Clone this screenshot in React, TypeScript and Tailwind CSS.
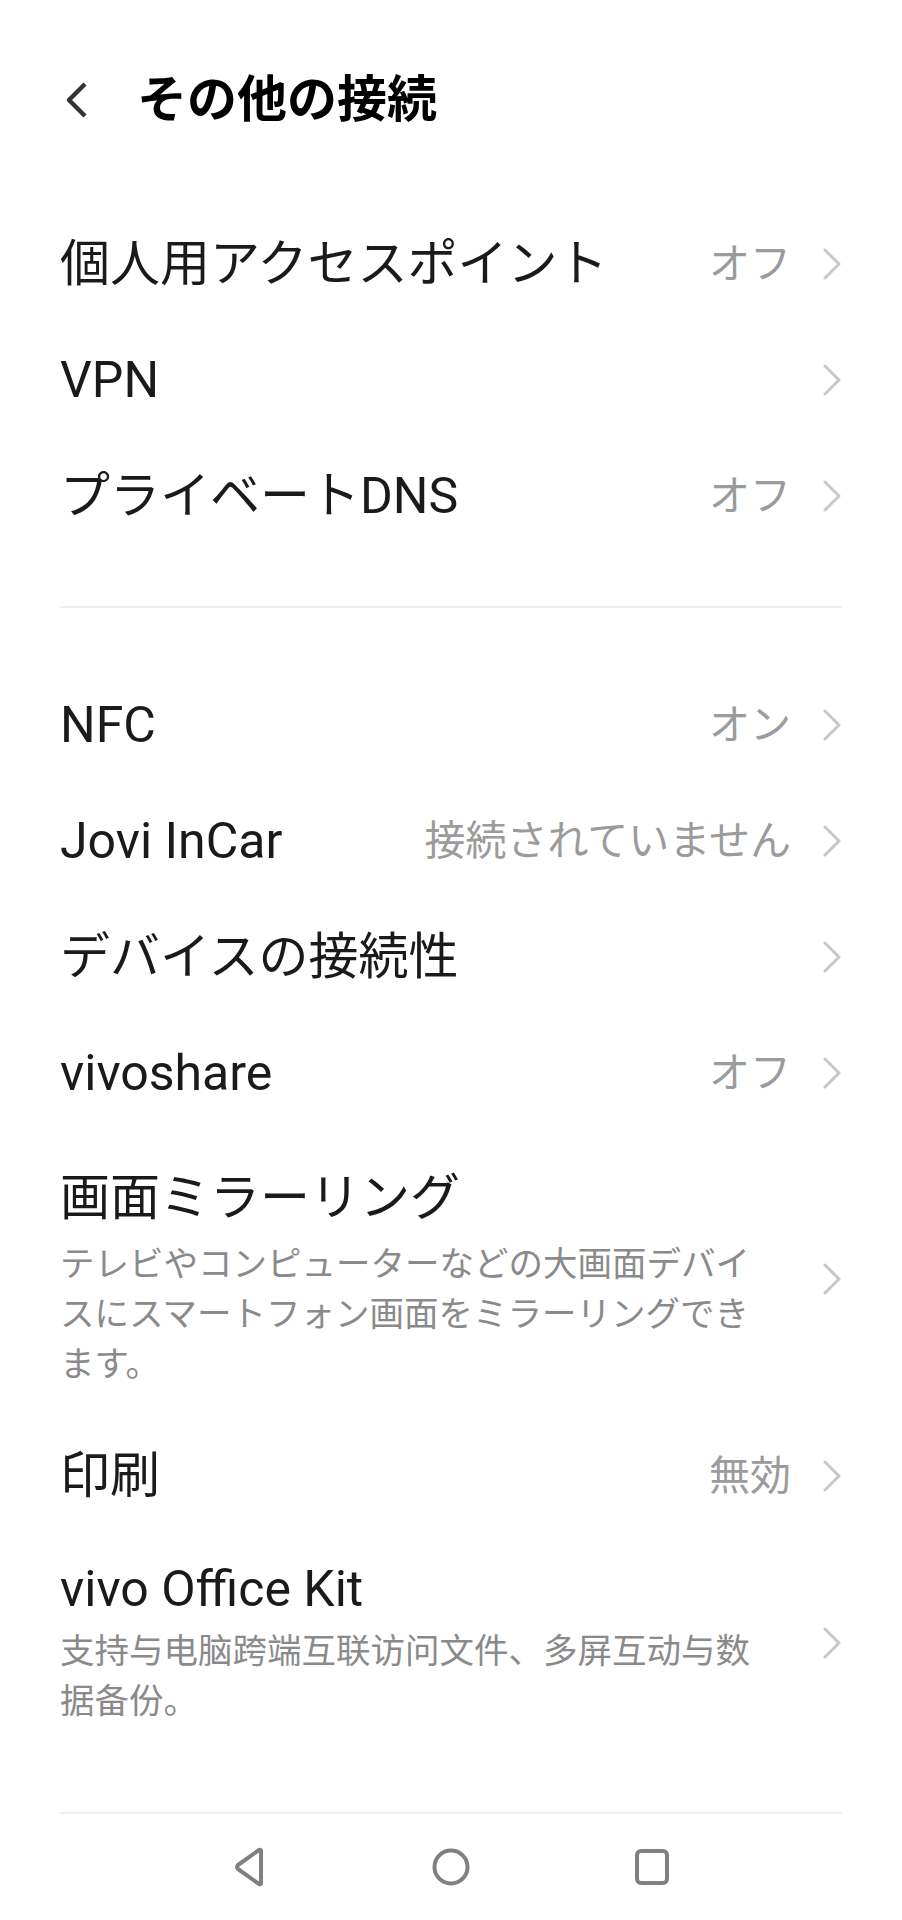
import React from 'react'

const jp = "font-['Roboto','Noto_Sans_CJK_JP',sans-serif]"
const sc = "font-['Roboto','Noto_Sans_CJK_SC',sans-serif]"

function Chevron() {
  return (
    <svg width="20" height="32" viewBox="0 0 20 32" className="shrink-0">
      <polyline points="3,2 17,16 3,30" fill="none" stroke="#c8c8c8" strokeWidth="3" strokeLinejoin="round" strokeLinecap="round" />
    </svg>
  )
}

function Row({ label, value }: { label: string; value?: string }) {
  return (
    <div className="flex h-[116px] items-center justify-between pl-[60px] pr-[60px]">
      <span className="text-[50px] leading-[60px] text-[#1a1a1a]">{label}</span>
      <div className="flex items-center gap-[31px]">
        {value && <span className="text-[41px] leading-[50px] text-[#9b9b9b]">{value}</span>}
        <Chevron />
      </div>
    </div>
  )
}

function Divider() {
  return <div className="mx-[60px] h-[2px] bg-[#efefef]" />
}

export default function App() {
  return (
    <div className={`flex h-[1920px] w-[902px] flex-col bg-white ${jp}`}>
      <div className="flex-1">
        {/* Header */}
        <div className="flex h-[200px] items-center pl-[65px]">
          <svg width="24" height="38" viewBox="0 0 24 38">
            <polyline points="20,3 4,19 20,35" fill="none" stroke="#333333" strokeWidth="4.5" strokeLinejoin="round" />
          </svg>
          <h1 className="ml-[48px] text-[50px] font-bold leading-[60px] text-black">その他の接続</h1>
        </div>

        <div className="pt-[6px]">
          <Row label="個人用アクセスポイント" value="オフ" />
          <Row label="VPN" />
          <Row label="プライベートDNS" value="オフ" />
        </div>

        <div className="mt-[52px]">
          <Divider />
        </div>

        <div className="mt-[59px]">
          <Row label="NFC" value="オン" />
          <Row label="Jovi InCar" value="接続されていません" />
          <Row label="デバイスの接続性" />
          <Row label="vivoshare" value="オフ" />

          {/* Screen mirroring */}
          <div className="flex items-center justify-between pb-[29px] pl-[60px] pr-[60px] pt-[37px]">
            <div className="w-[705px]">
              <div className="text-[50px] leading-[60px] text-[#1a1a1a]">画面ミラーリング</div>
              <p className="mt-[11px] text-[34.5px] leading-[50px] text-[#8a8a8a]">
                テレビやコンピューターなどの大画面デバイスにスマートフォン画面をミラーリングできます。
              </p>
            </div>
            <Chevron />
          </div>

          <Row label="印刷" value="無効" />

          {/* Office kit */}
          <div className="flex items-center justify-between pb-[23px] pl-[60px] pr-[60px] pt-[25px]">
            <div className="w-[705px]">
              <div className="text-[50px] leading-[60px] text-[#1a1a1a]">vivo Office Kit</div>
              <p className={`mt-[7px] text-[34.5px] leading-[50px] text-[#8a8a8a] ${sc}`}>
                支持与电脑跨端互联访问文件、多屏互动与数据备份。
              </p>
            </div>
            <Chevron />
          </div>
        </div>
      </div>

      {/* Navigation bar */}
      <div className="mx-[60px] h-[2px] bg-[#efefef]" />
      <div className="flex h-[106px] items-center justify-center gap-[121px]">
        <div className="flex w-[80px] justify-center">
          <svg width="36" height="40" viewBox="0 0 36 40">
            <path d="M29 4 L29 36 Q29 38 27 37 L6 22 Q4 20 6 18 L27 3 Q29 2 29 4 Z" fill="none" stroke="#808080" strokeWidth="4" strokeLinejoin="round" />
          </svg>
        </div>
        <div className="flex w-[80px] justify-center">
          <svg width="40" height="40" viewBox="0 0 40 40">
            <circle cx="20" cy="20" r="16.5" fill="none" stroke="#808080" strokeWidth="4" />
          </svg>
        </div>
        <div className="flex w-[80px] justify-center">
          <svg width="36" height="38" viewBox="0 0 36 38">
            <rect x="3" y="3" width="30" height="32" rx="4" fill="none" stroke="#808080" strokeWidth="4" />
          </svg>
        </div>
      </div>
    </div>
  )
}
